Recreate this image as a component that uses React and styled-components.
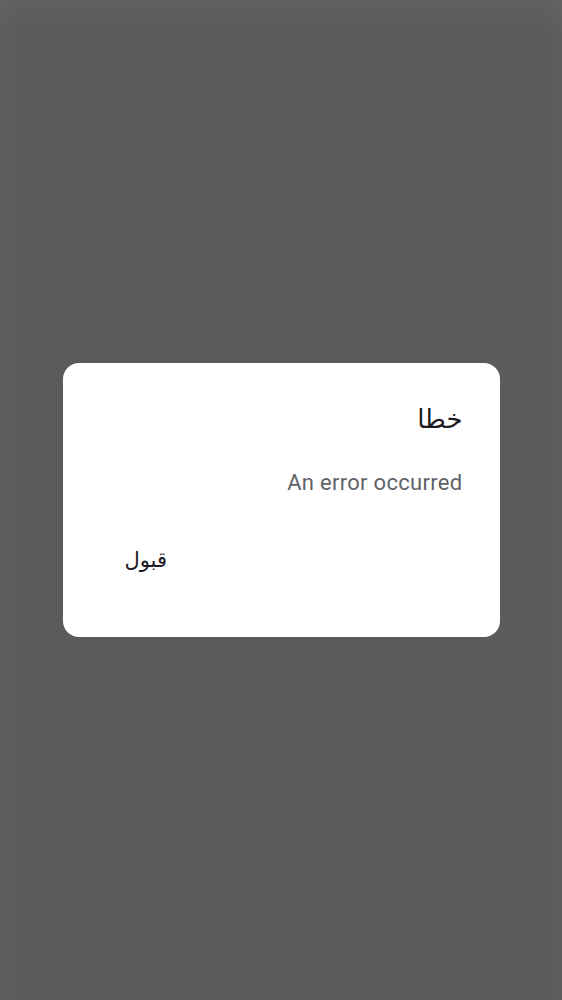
import React from "react"
import styled, { createGlobalStyle } from "styled-components"

const GlobalStyle = createGlobalStyle`
  html, body {
    margin: 0;
    padding: 0;
    height: 100%;
  }
  body {
    font-family: Roboto, "DejaVu Sans", sans-serif;
    background: #5b5b5b;
  }
`

// full screen scrim behind the dialog
const Scrim = styled.div`
  width: 562px;
  height: 1000px;
  box-sizing: border-box;
  background: #5b5b5b;
  box-shadow: inset 0 34px 30px -20px rgba(255, 255, 255, 0.04),
    inset 22px 0 20px -14px rgba(255, 255, 255, 0.03),
    inset -22px 0 20px -14px rgba(255, 255, 255, 0.03);
  display: flex;
  align-items: center;
  justify-content: center;
`

const Dialog = styled.div`
  direction: rtl;
  width: 437px;
  height: 274px;
  margin-top: -1px;
  box-sizing: border-box;
  background: #ffffff;
  border-radius: 16px;
  padding: 36px 37px 0 37px;
  display: flex;
  flex-direction: column;
`

const Title = styled.h2`
  margin: 0;
  font-size: 26px;
  font-weight: 400;
  line-height: 40px;
  color: #1c1b1f;
  text-align: right;
`

const Message = styled.p`
  margin: 30px 0 0;
  font-size: 22px;
  line-height: 28px;
  color: #5f6368;
  text-align: right;
  letter-spacing: 0.3px;
`

const Actions = styled.div`
  display: flex;
  justify-content: flex-end;
  margin-top: 43px;
`

const TextButton = styled.button`
  border: none;
  background: transparent;
  font-family: Roboto, "DejaVu Sans", sans-serif;
  font-size: 21px;
  color: #1c1b1f;
  padding: 8px 14px;
  margin-left: 11px;
  cursor: pointer;
`

function App() {
  return (
    <>
      <GlobalStyle />
      <Scrim>
        <Dialog>
          <Title>خطا</Title>
          <Message>An error occurred</Message>
          <Actions>
            <TextButton>قبول</TextButton>
          </Actions>
        </Dialog>
      </Scrim>
    </>
  )
}

export default App
